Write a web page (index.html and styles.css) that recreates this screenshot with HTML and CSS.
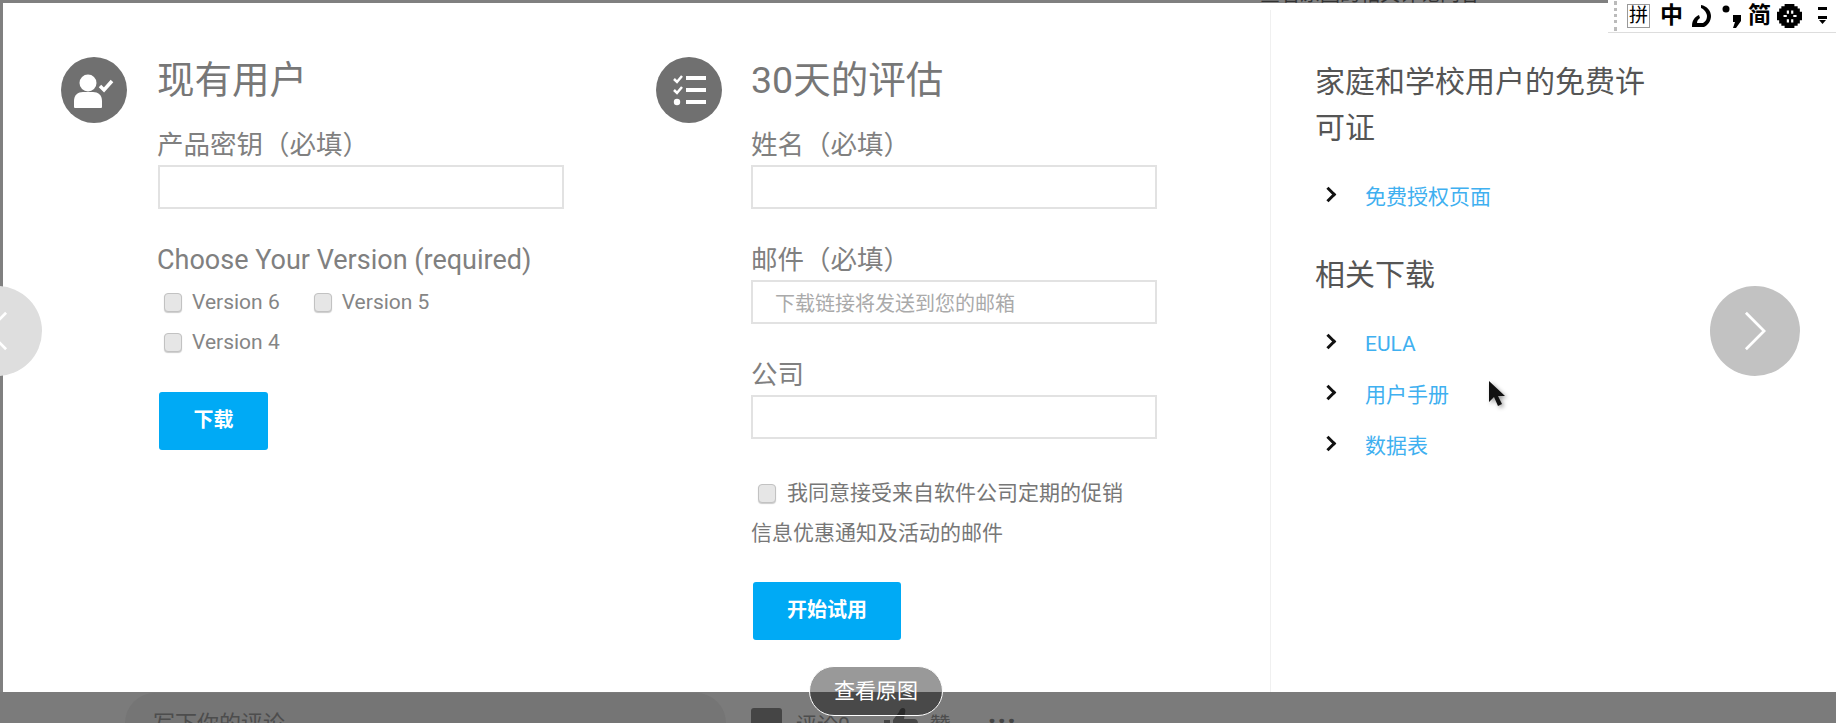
FILE: index.html
```html
<!DOCTYPE html>
<html lang="en">
<head>
  <meta charset="UTF-8">
  <meta name="viewport" content="width=device-width, initial-scale=1.0">
  <title>下载</title>
  <link rel="stylesheet" href="styles.css">
</head>
<body>
  <div class="top-band"><span class="top-band-text">查看原图的相关评论内容</span></div>

  <div class="modal">
    <section class="column column-existing">
      <div class="round-icon">
        <svg viewBox="0 0 66 66" width="66" height="66">
          <circle cx="27" cy="26" r="8.5" fill="#fff"/>
          <path d="M13 50v-6c0-6 4-9 9-9h10c5 0 9 3 9 9v6c0 1-1 1-2 1H15c-1 0-2 0-2-1z" fill="#fff"/>
          <path d="M39 29l4 4 8-9" fill="none" stroke="#fff" stroke-width="3.5"/>
        </svg>
      </div>
      <div class="form">
        <h2 class="heading">现有用户</h2>
        <label class="field-label">产品密钥（必填）</label>
        <input class="text-input" type="text">
        <label class="field-label field-next field-latin">Choose Your Version (required)</label>
        <div class="check-row">
          <label class="check"><input type="checkbox">Version 6</label>
          <label class="check"><input type="checkbox">Version 5</label>
        </div>
        <div class="check-row">
          <label class="check"><input type="checkbox">Version 4</label>
        </div>
        <a href="#" class="blue-btn btn-short">下载</a>
      </div>
    </section>

    <section class="column column-trial">
      <div class="round-icon">
        <svg viewBox="0 0 66 66" width="66" height="66">
          <path d="M18 22l3 3 5-6M18 33l3 3 5-6" fill="none" stroke="#fff" stroke-width="2.5"/>
          <circle cx="21" cy="45" r="3.2" fill="#fff"/>
          <path d="M30 19h20v4H30zM30 31h20v4H30zM30 43h20v4H30z" fill="#fff"/>
        </svg>
      </div>
      <div class="form">
        <h2 class="heading">30天的评估</h2>
        <label class="field-label">姓名（必填）</label>
        <input class="text-input" type="text">
        <label class="field-label field-next">邮件（必填）</label>
        <input class="text-input" type="text" placeholder="下载链接将发送到您的邮箱">
        <label class="field-label field-next">公司</label>
        <input class="text-input" type="text">
        <p class="consent"><input type="checkbox">我同意接受来自软件公司定期的促销信息优惠通知及活动的邮件</p>
        <a href="#" class="blue-btn btn-long">开始试用</a>
      </div>
    </section>

    <aside class="column column-side">
      <h3 class="side-title">家庭和学校用户的免费许可证</h3>
      <ul class="side-list">
        <li><a href="#">免费授权页面</a></li>
      </ul>
      <h3 class="side-title side-title-next">相关下载</h3>
      <ul class="side-list">
        <li><a href="#">EULA</a></li>
        <li><a href="#">用户手册</a></li>
        <li><a href="#">数据表</a></li>
      </ul>
    </aside>
  </div>

  <div class="bottom-bar">
    <div class="comment-box">写下你的评论</div>
    <div class="bar-square"></div>
    <span class="bar-text bar-comments">评论0</span>
    <svg class="bar-thumb" viewBox="0 0 34 30" width="34" height="30">
      <path d="M0 12h6v18H0zM9 12l6-8c1-3 2-4 4-4s3 2 2 5l-1 6h10c3 0 4 2 4 5l-3 14H9z" fill="#454545"/>
    </svg>
    <span class="bar-text bar-like">赞</span>
    <span class="bar-more">...</span>
  </div>

  <!-- things lying over the page -->
  <button class="nav-circle nav-prev">
    <svg viewBox="0 0 24 44" width="22" height="40"><path d="M22 2L2 22l20 20" fill="none" stroke="#fff" stroke-width="3"/></svg>
  </button>
  <button class="nav-circle nav-next">
    <svg viewBox="0 0 24 44" width="22" height="40"><path d="M2 2l20 20L2 42" fill="none" stroke="#fff" stroke-width="3"/></svg>
  </button>
  <div class="view-original">查看原图</div>

  <svg class="mouse-cursor" viewBox="0 0 20 30" width="20" height="30">
    <path d="M2 1v21l5-5 4 9 4-2-4-8h7z" fill="#111"/>
  </svg>

  <div class="ime-bar">
    <span class="ime-grip"></span>
    <span class="ime-box">拼</span>
    <span class="ime-char ime-zh">中</span>
    <svg class="ime-moon" viewBox="0 0 19 22" width="19" height="22">
      <path d="M9 0c6 1 10 6 10 11 0 5-3 9-7 11H0c0-3 0-5 2-8 1-2 3-3 5-4l1 3c-1 1-3 2-3 5h6c3-2 4-4 4-7 0-3-3-7-6-8z" fill="#000"/>
    </svg>
    <svg class="ime-punct" viewBox="0 0 20 24" width="20" height="24">
      <circle cx="4" cy="5" r="3.5" fill="#000"/>
      <path d="M11 11h8v6l-5 7h-3l2-6h-2z" fill="#000"/>
    </svg>
    <span class="ime-char ime-simple">简</span>
    <svg class="ime-gear" viewBox="0 0 23 22" width="25" height="24">
      <path d="M7 0h9v2h3v2h2v3h2v8h-2v3h-2v2h-3v2H7v-2H4v-2H2v-3H0V7h2V4h2V2h3z" fill="#000"/>
      <path d="M9 6h2v3H9zM13 6h2v3h-2zM6 10h3v2H6zM15 10h3v2h-3zM9 14h2v3H9zM13 14h2v3h-2z" fill="#fff"/>
    </svg>
    <svg class="ime-menu" viewBox="0 0 9 18" width="9" height="18">
      <path d="M0 0h9v3H0zM0 9h9v3H0zM1 13h7l-3.5 4z" fill="#000"/>
    </svg>
  </div>
</body>
</html>
```

FILE: styles.css
```css
* {
  box-sizing: border-box;
}
html, body {
  margin: 0;
  height: 723px;
  overflow: hidden;
}
body {
  position: relative;
  display: flex;
  flex-direction: column;
  background-color: #808080;
  font-family: Roboto, "Noto Sans CJK SC", sans-serif;
  color: #777;
}

/* top strip, text of the page behind is cut off */
.top-band {
  height: 3px;
  overflow: hidden;
  background-color: #808080;
  position: relative;
}
.top-band-text {
  position: absolute;
  left: 1260px;
  top: -18px;
  font-size: 20px;
  line-height: 24px;
  color: #333;
  white-space: nowrap;
}

.modal {
  display: flex;
  height: 689px;
  margin-left: 3px;
  background-color: #fff;
}
.column {
  padding-top: 54px;
}
.column-existing {
  display: flex;
  width: 653px;
  padding-left: 58px;
  gap: 30px;
}
.column-trial {
  display: flex;
  width: 614px;
  gap: 29px;
}
.column-side {
  width: 566px;
  margin-top: 7px;
  padding-top: 49px;
  padding-left: 44px;
  border-left: 1px solid #f0f0f0;
}

.round-icon {
  flex: none;
  width: 66px;
  height: 66px;
  border-radius: 50%;
  background-color: #707070;
}
.round-icon svg {
  display: block;
}
.form {
  width: 406px;
}
.heading {
  margin: 1px 0 0;
  font-size: 37.5px;
  line-height: 44px;
  font-weight: 400;
  color: #777;
}
.field-label {
  display: block;
  margin-top: 28px;
  font-size: 26.5px;
  line-height: 30px;
  color: #808080;
}
.field-next {
  margin-top: 36.5px;
}
.field-latin {
  font-size: 27px;
}
.text-input {
  display: block;
  width: 100%;
  height: 43.5px;
  margin-top: 5px;
  padding: 4px 22px 0;
  border: 2px solid #e2e2e2;
  background-color: #fff;
  font-family: inherit;
  font-size: 20px;
  outline: none;
}
.column-existing .text-input {
  margin-left: 1px;
}
.text-input::placeholder {
  color: #aaa;
}

input[type="checkbox"] {
  appearance: none;
  flex: none;
  width: 18px;
  height: 19px;
  margin: 0;
  border: 1px solid #c2c2c2;
  border-radius: 4px;
  background-color: #e6e6e6;
  box-shadow: 0 1px 1px #ccc;
}
.check-row {
  display: flex;
  gap: 34px;
  height: 40px;
  padding-left: 7px;
  align-items: center;
}
.check-row:first-of-type {
  margin-top: 7px;
}
.check {
  display: flex;
  align-items: center;
  gap: 10px;
  font-size: 21px;
  color: #858585;
}
.blue-btn {
  display: block;
  margin-left: 2px;
  height: 58px;
  line-height: 56px;
  border-radius: 3px;
  background-color: #00aaf5;
  color: #fff;
  text-align: center;
  text-decoration: none;
  font-size: 20px;
  font-weight: 700;
}
.btn-short {
  width: 109px;
  margin-top: 30px;
}
.btn-long {
  width: 148px;
  margin-top: 29px;
}
.consent {
  width: 375px;
  margin: 34px 0 0;
  font-size: 21px;
  line-height: 40px;
  color: #777;
}
.consent input {
  display: inline-block;
  margin: 0 11px 0 7px;
  vertical-align: -3px;
}

.side-title {
  width: 340px;
  margin: 0;
  font-size: 30px;
  line-height: 46px;
  font-weight: 400;
  color: #555;
}
.side-title-next {
  margin-top: 29px;
}
.side-list {
  list-style: none;
  margin: 21px 0 0;
  padding: 0;
}
.side-list li {
  position: relative;
  height: 51px;
  padding-left: 50px;
  font-size: 21px;
  line-height: 50px;
}
.side-list li::before {
  content: "";
  position: absolute;
  left: 8px;
  top: 17px;
  width: 8px;
  height: 8px;
  border-top: 3.5px solid #111;
  border-right: 3.5px solid #111;
  transform: rotate(45deg);
}
.side-list a {
  color: #3fb0f0;
  text-decoration: none;
}

.bottom-bar {
  position: relative;
  display: flex;
  height: 31px;
  overflow: hidden;
  background-color: #7b7b7b;
  padding-left: 125px;
  color: #4d4d4d;
}
.comment-box {
  flex: none;
  width: 601px;
  height: 60px;
  margin-top: 1px;
  padding: 16px 28px;
  border-radius: 30px;
  background-color: #757575;
  font-size: 22px;
  line-height: 30px;
}
.bar-square {
  flex: none;
  width: 31px;
  height: 31px;
  margin: 16px 0 0 25px;
  border-radius: 3px;
  background-color: #454545;
}
.bar-text {
  font-size: 21px;
  line-height: 28px;
  margin-top: 19px;
}
.bar-comments {
  margin-left: 14px;
}
.bar-thumb {
  flex: none;
  margin: 16px 0 0 34px;
}
.bar-like {
  margin-left: 12px;
}
.bar-more {
  margin: 6px 0 0 37px;
  font-size: 30px;
  font-weight: 700;
  line-height: 30px;
  letter-spacing: 1px;
  color: #454545;
}

.nav-circle {
  position: absolute;
  top: 286px;
  display: flex;
  align-items: center;
  justify-content: center;
  width: 90px;
  height: 90px;
  padding: 0;
  border: 0;
  border-radius: 50%;
}
.nav-prev {
  left: -48px;
  background-color: #dedede;
}
.nav-next {
  left: 1710px;
  background-color: #c2c2c2;
}
.view-original {
  position: absolute;
  left: 809px;
  top: 666px;
  width: 134px;
  height: 50px;
  border: 1px solid #fff;
  border-radius: 25px;
  background-color: rgba(0, 0, 0, 0.4);
  color: #fff;
  text-align: center;
  font-size: 21px;
  line-height: 48px;
}
.mouse-cursor {
  position: absolute;
  left: 1487px;
  top: 380px;
  filter: drop-shadow(2px 2px 2px rgba(0, 0, 0, 0.4));
}

/* input method toolbar */
.ime-bar {
  position: absolute;
  left: 1608px;
  top: 0;
  display: flex;
  align-items: center;
  width: 228px;
  height: 33px;
  border-bottom: 1px solid #ddd;
  background-color: #fff;
  color: #000;
  font-weight: 700;
}
.ime-grip {
  flex: none;
  width: 3px;
  height: 30px;
  margin: 0 0 0 6px;
  border-left: 3px dotted #bbb;
}
.ime-box {
  flex: none;
  width: 23px;
  height: 24px;
  margin-left: 10px;
  border: 1px solid #999;
  font-size: 19px;
  font-weight: 400;
  line-height: 21px;
  text-align: center;
}
.ime-char {
  flex: none;
  width: 23px;
  font-size: 23px;
  line-height: 28px;
}
.ime-zh {
  margin-left: 10px;
}
.ime-moon {
  flex: none;
  margin-left: 9px;
}
.ime-punct {
  flex: none;
  margin-left: 11px;
}
.ime-simple {
  margin-left: 6px;
}
.ime-gear {
  flex: none;
  margin-left: 6px;
}
.ime-menu {
  flex: none;
  margin-left: 16px;
}
```
